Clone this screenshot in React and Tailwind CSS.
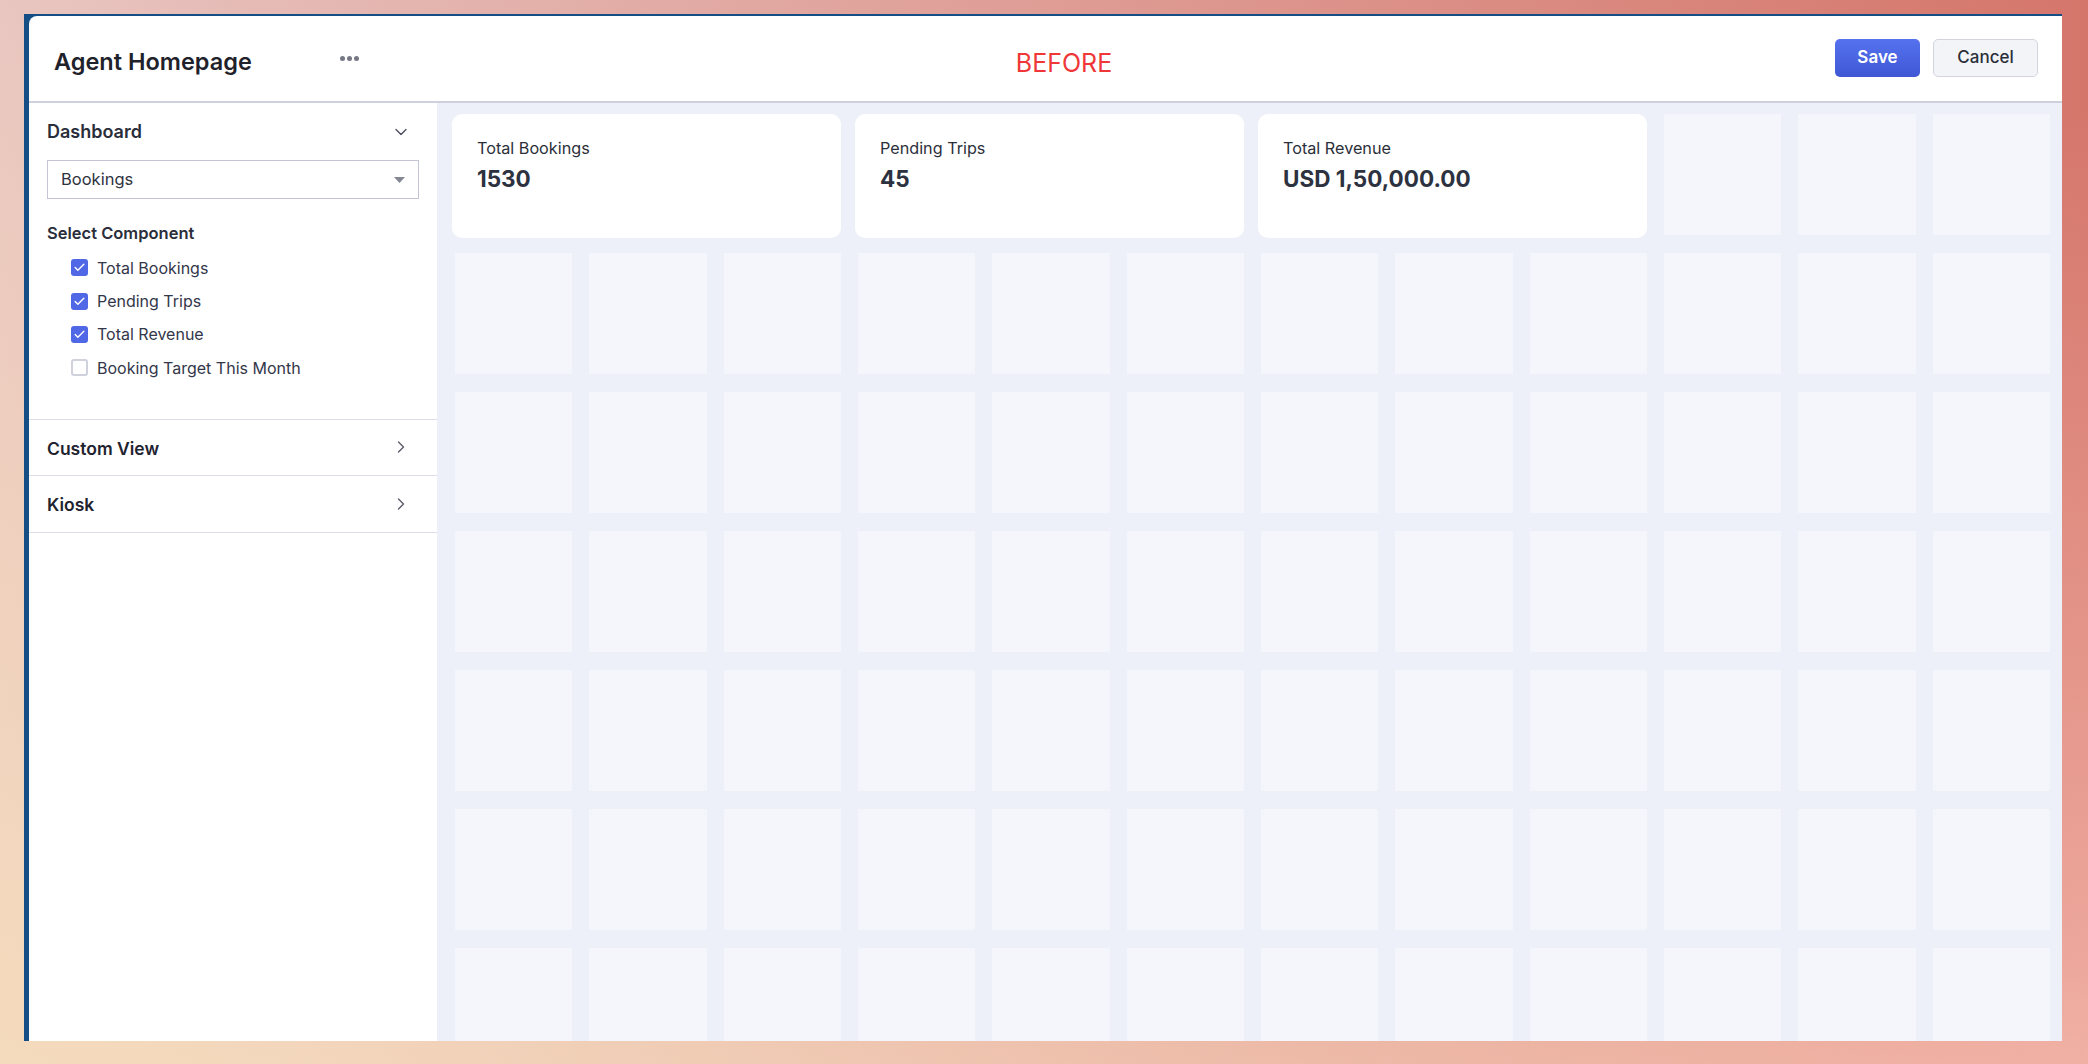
import React from 'react';
import { ChevronDown, ChevronRight, Check } from 'lucide-react';

const components = [
  { label: 'Total Bookings', checked: true },
  { label: 'Pending Trips', checked: true },
  { label: 'Total Revenue', checked: true },
  { label: 'Booking Target This Month', checked: false },
];

const cards = [
  { title: 'Total Bookings', value: '1530' },
  { title: 'Pending Trips', value: '45' },
  { title: 'Total Revenue', value: 'USD 1,50,000.00' },
];

const Sidebar = () => (
  <aside className="w-[408px] shrink-0 bg-white">
    <div className="px-[18px] pt-[17px] pb-[34px]">
      {/* Dashboard section */}
      <div className="flex items-center justify-between pr-[8px]">
        <span className="text-[18px] leading-[24px] font-semibold text-[#2a2e3a]">Dashboard</span>
        <ChevronDown size={20} strokeWidth={1.6} className="text-[#4b4e5c]" />
      </div>

      <div className="mt-[16px] h-[39px] border border-[#c4c5d4] flex items-center justify-between pl-[13px] pr-[13px]">
        <span className="text-[16.5px] text-[#2f3340]">Bookings</span>
        <svg width="11" height="6" viewBox="0 0 11 6">
          <path d="M0 0 L11 0 L5.5 6 Z" fill="#858794" />
        </svg>
      </div>

      <div className="mt-[23px] text-[16.5px] leading-[22px] font-semibold text-[#2a2e3a]">Select Component</div>

      <div className="mt-[7px] pl-[24px]">
        {components.map((c) => (
          <div key={c.label} className="h-[33.4px] flex items-center gap-[9px]">
            {c.checked ? (
              <span className="w-[17px] h-[17px] rounded-[3px] bg-[#5067e6] flex items-center justify-center">
                <Check size={13} strokeWidth={2.6} className="text-white" />
              </span>
            ) : (
              <span className="w-[17px] h-[17px] rounded-[3px] border-2 border-[#cfd1dc] bg-white" />
            )}
            <span className="text-[16px] text-[#33374a]">{c.label}</span>
          </div>
        ))}
      </div>
    </div>

    {/* Collapsed sections */}
    {['Custom View', 'Kiosk'].map((s, i) => (
      <div
        key={s}
        className={`h-[57px] flex items-center justify-between pl-[18px] pr-[26px] border-b border-[#dcdde8] ${i === 0 ? 'border-t' : ''}`}
      >
        <span className="text-[17.5px] font-semibold text-[#1f2330] pt-[4px]">{s}</span>
        <ChevronRight size={20} strokeWidth={1.6} className="text-[#585b68]" />
      </div>
    ))}
  </aside>
);

const Canvas = () => {
  const tiles = Array.from({ length: 3 + 12 * 6 });
  return (
    <main className="flex-1 bg-[#eef0f9] overflow-hidden pl-[18px] pr-[12px] pt-[11px]">
      <div className="grid grid-cols-12 gap-x-[17px] gap-y-[18px] auto-rows-[121px]">
        {cards.map((c) => (
          <div key={c.title} className="col-span-3 -ml-[3px] h-[124px] bg-white rounded-[10px] pl-[25px] pt-[23px]">
            <div className="text-[16.2px] leading-[22px] text-[#2b2f3a]">{c.title}</div>
            <div className="mt-[5px] text-[22.5px] leading-[30px] font-bold text-[#2d3240]">{c.value}</div>
          </div>
        ))}
        {tiles.map((_, i) => (
          <div key={i} className="bg-[#f5f6fc]" />
        ))}
      </div>
    </main>
  );
};

export default function App() {
  return (
    <div className="w-full h-screen overflow-hidden flex flex-col pt-[14px] pl-[24px] pr-[26px] pb-[23px] font-['Inter',sans-serif] bg-[linear-gradient(to_top_right,#f5dbbd_0%,transparent_55%),linear-gradient(to_top_left,#f0ada2_0%,transparent_45%),linear-gradient(to_right,#e8c4c0,#d5766b)]">
      <div className="flex-1 min-h-0 bg-[#144e84] pl-[5px] pt-[2px] flex">
        <div className="flex-1 min-w-0 bg-white rounded-tl-[8px] overflow-hidden flex flex-col">
          {/* Header */}
          <header className="h-[87px] shrink-0 border-b-2 border-[#cfd0dd] flex items-center pl-[25px] pr-[24px]">
            <h1 className="text-[23.5px] font-semibold text-[#1f222b] pt-[7px]">Agent Homepage</h1>
            <div className="ml-[88px] flex items-center gap-[2px]">
              <span className="w-[5px] h-[5px] rounded-full bg-[#767885]" />
              <span className="w-[5px] h-[5px] rounded-full bg-[#767885]" />
              <span className="w-[5px] h-[5px] rounded-full bg-[#767885]" />
            </div>
            <span className="ml-[657px] text-[25px] text-[#ef3737] pt-[10px]">BEFORE</span>
            <div className="ml-auto flex items-center gap-[13px] -mt-[2px]">
              <button className="w-[85px] h-[38px] rounded-[5px] bg-gradient-to-b from-[#5672ef] to-[#3f57d5] text-white text-[17px] font-semibold">
                Save
              </button>
              <button className="w-[105px] h-[38px] rounded-[5px] border border-[#d3d4df] bg-[#f3f4f8] text-[#2b2f3a] text-[17px] font-medium">
                Cancel
              </button>
            </div>
          </header>

          <div className="flex-1 min-h-0 flex">
            <Sidebar />
            <Canvas />
          </div>
        </div>
      </div>
    </div>
  );
}
